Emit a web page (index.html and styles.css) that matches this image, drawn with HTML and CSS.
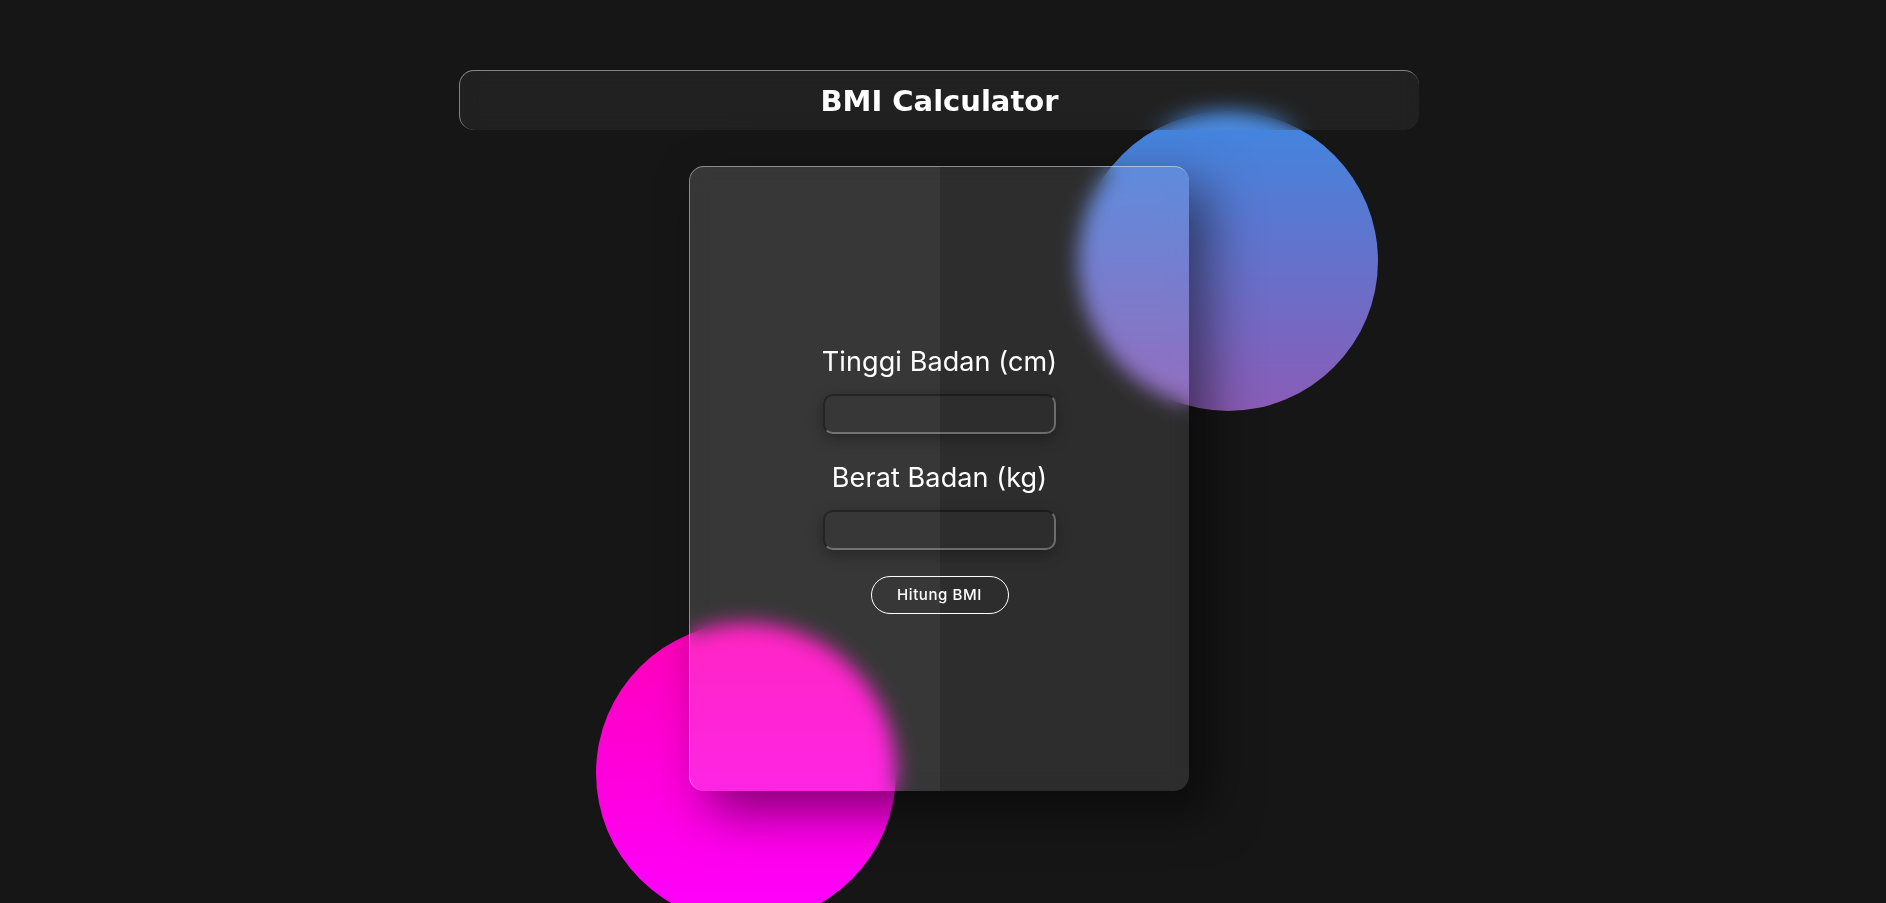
FILE: index.html
```html
<!DOCTYPE html>
<html lang="id">
<head>
    <meta charset="UTF-8">
    <meta name="viewport" content="width=device-width, initial-scale=1.0">
    <title>BMI Calculator</title>
    <link rel="stylesheet" href="styles.css">
</head>
<body>

<div class="page">
    <header class="title-bar">
        <h1>BMI Calculator</h1>
    </header>

    <div class="stage">
        <!-- bulatan latar -->
        <div class="circle circle-blue"></div>
        <div class="circle circle-pink"></div>

        <div class="card">
            <form class="bmi-form" id="bmi-form">
                <label for="tinggi">Tinggi Badan (cm)</label>
                <input type="number" id="tinggi">

                <label for="berat">Berat Badan (kg)</label>
                <input type="number" id="berat">

                <button type="submit">Hitung BMI</button>
            </form>
        </div>
    </div>
</div>

<script>
    document.getElementById('bmi-form').addEventListener('submit', function(e) {
        e.preventDefault();

        const tinggi = parseFloat(document.getElementById('tinggi').value) / 100;
        const berat = parseFloat(document.getElementById('berat').value);

        if (!tinggi || !berat) {
            alert("Isi tinggi dan berat badan dulu!");
            return;
        }

        const bmi = berat / (tinggi * tinggi);
        alert("BMI kamu: " + bmi.toFixed(1));
    });
</script>

</body>
</html>
```

FILE: styles.css
```css
html, body {
    margin: 0;
    height: 100%;
    overflow: hidden;
}
body {
    background-color: #161616;
    font-family: 'Inter', sans-serif;
    color: #fff;
}
.page {
    padding: 70px 8px 0 0;
}
.title-bar {
    position: relative;
    z-index: 2;
    width: 960px;
    height: 60px;
    margin: 0 auto;
    box-sizing: border-box;
    display: flex;
    align-items: center;
    justify-content: center;
    background-color: rgba(255, 255, 255, 0.05);
    border-top: 1px solid rgba(255, 255, 255, 0.45);
    border-left: 1px solid rgba(255, 255, 255, 0.45);
    border-radius: 15px;
    backdrop-filter: blur(10px);
}
h1 {
    margin: 0;
    font-family: 'DejaVu Sans', sans-serif;
    font-weight: bold;
    font-size: 29px;
    line-height: 1;
    padding-top: 2px;
}
.stage {
    position: relative;
    width: 500px;
    margin: 36px auto 0;
}
.circle {
    position: absolute;
    z-index: 0;
    width: 300px;
    height: 300px;
    border-radius: 50%;
}
.circle-blue {
    left: 389px;
    top: -55px;
    background: linear-gradient(#3f87e0, #8a5cb6);
}
.circle-pink {
    left: -93px;
    top: 457px;
    background: linear-gradient(#ff00b8, #ff00ff);
}
.card {
    position: relative;
    z-index: 1;
    height: 625px;
    box-sizing: border-box;
    padding-top: 3px;
    display: flex;
    align-items: center;
    justify-content: center;
    overflow: hidden;
    background-color: rgba(255, 255, 255, 0.1);
    border-top: 1px solid rgba(255, 255, 255, 0.45);
    border-left: 1px solid rgba(255, 255, 255, 0.45);
    border-radius: 15px;
    box-shadow: 20px 20px 50px rgba(0, 0, 0, 0.5);
    backdrop-filter: blur(10px);
}
.card::before {
    content: "";
    position: absolute;
    top: 0;
    left: 0;
    width: 50%;
    height: 100%;
    background-color: rgba(255, 255, 255, 0.05);
    pointer-events: none;
}
.bmi-form {
    position: relative;
    display: flex;
    flex-direction: column;
    align-items: center;
}
.bmi-form label {
    font-size: 27px;
    line-height: 27px;
    letter-spacing: 0.1px;
}
.bmi-form input {
    width: 233px;
    height: 40px;
    box-sizing: border-box;
    margin: 19px 0 30px;
    padding: 0 12px;
    background: transparent;
    color: #fff;
    font-family: 'Inter', sans-serif;
    font-size: 16px;
    border: 2px solid rgba(0, 0, 0, 0.35);
    border-right-color: rgba(255, 255, 255, 0.3);
    border-bottom-color: rgba(255, 255, 255, 0.3);
    border-radius: 10px;
    box-shadow: 0 5px 15px rgba(0, 0, 0, 0.3);
    outline: none;
}
.bmi-form input:last-of-type {
    margin-bottom: 26px;
}
.bmi-form button {
    width: 138px;
    height: 38px;
    background: transparent;
    color: #fff;
    border: 1px solid #fff;
    border-radius: 20px;
    font-family: 'Inter', sans-serif;
    font-size: 15px;
    font-weight: 500;
    letter-spacing: 0.6px;
    cursor: pointer;
}
.bmi-form button:hover {
    background-color: rgba(255, 255, 255, 0.1);
}
```
